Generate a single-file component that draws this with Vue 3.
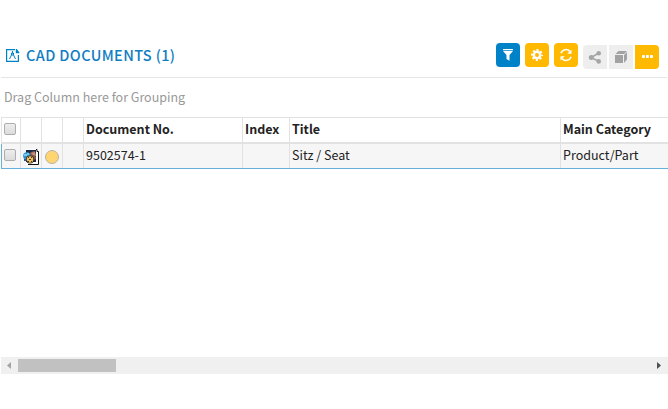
<script setup>
const columns = [
  { key: 'select', label: '' },
  { key: 'type', label: '' },
  { key: 'status', label: '' },
  { key: 'lock', label: '' },
  { key: 'number', label: 'Document No.' },
  { key: 'index', label: 'Index' },
  { key: 'title', label: 'Title' },
  { key: 'category', label: 'Main Category' }
]
const row = { number: '9502574-1', index: '', title: 'Sitz / Seat', category: 'Product/Part' }
</script>

<template>
  <main class="panel">
    <header class="heading">
      <svg class="doc-icon" width="14" height="15" viewBox="0 0 14 15" fill="none" stroke="#0082c8">
        <path d="M9 .6H.6v11.8h11.8V6" stroke-width="1.2" />
        <path d="M9.8 0v4.2h3.5V3.3L10.8 0z" fill="#0082c8" stroke="none" />
        <path d="M6.5 2v2M6 4.5 5 7 3.5 10M7 4.5 8 7l1.5 3M5.5 4h2v2h-2z" />
      </svg>
      <h1>CAD DOCUMENTS (1)</h1>
      <div class="tools">
        <button class="blue" aria-label="Filter">
          <svg width="24" height="24" viewBox="0 0 24 24" fill="#fff"><path d="M7 6h10v1.2H7zM7 8h10l-3.5 4v5.8L10.5 16v-4z" /></svg>
        </button>
        <button class="yellow" aria-label="Settings">
          <svg width="24" height="24" viewBox="0 0 24 24"><g fill="none" stroke="#fff"><circle cx="12" cy="12" r="3.2" stroke-width="2.4" /><circle cx="12" cy="12" r="4.9" stroke-width="2" stroke-dasharray="2.1 1.748" stroke-dashoffset="1.05" /></g></svg>
        </button>
        <button class="yellow" aria-label="Refresh">
          <svg width="24" height="24" viewBox="0 0 24 24" fill="none" stroke="#fff" stroke-width="1.5"><path d="M7 10.3A5.2 5.2 0 0 1 16 8.5M17 13.7A5.2 5.2 0 0 1 8 15.5" /><path d="M17.5 6.5v4.2h-4.2zM6.5 17.5v-4.2h4.2z" fill="#fff" stroke="none" /></svg>
        </button>
        <div class="group">
          <button class="gray first" aria-label="Share">
            <svg width="24" height="24" viewBox="0 0 24 24" fill="#a6a6a6"><path d="M16 8 8 12.5l8 4" fill="none" stroke="#a6a6a6" stroke-width="1.5" /><circle cx="15.7" cy="8.2" r="2.3" /><circle cx="8.3" cy="12.5" r="2.5" /><circle cx="15.7" cy="16.4" r="2.3" /></svg>
          </button>
          <button class="gray" aria-label="Model">
            <svg width="24" height="24" viewBox="0 0 24 24" fill="#a2a2a2"><path d="M6 10h8v8H6zM6.5 9l3-3H18l-3 3zM15 10l3-3v7.5L15 18z" /></svg>
          </button>
          <button class="yellow last" aria-label="More">
            <svg width="24" height="24" viewBox="0 0 24 24" fill="#fff"><rect x="7" y="10" width="3" height="3" rx=".8" /><rect x="11" y="10" width="3" height="3" rx=".8" /><rect x="15" y="10" width="3" height="3" rx=".8" /></svg>
          </button>
        </div>
      </div>
    </header>

    <div class="grouping"><span>Drag Column here for Grouping</span></div>

    <section class="grid">
      <div class="line head">
        <div v-for="col in columns" :key="col.key" class="cell">
          <i v-if="col.key === 'select'" class="check"></i>
          <span v-else :class="col.key">{{ col.label }}</span>
        </div>
      </div>
      <div class="line record">
        <div v-for="col in columns" :key="col.key" class="cell">
          <i v-if="col.key === 'select'" class="check"></i>
          <svg v-else-if="col.key === 'type'" class="part" width="17" height="16" viewBox="0 0 17 16">
            <path d="M3 0h10l3 3v13H3z" fill="#fff" />
            <path d="M13 .5h1v2h1.5v13H5" fill="none" stroke="#111" />
            <path d="M3 1h10v12H3z" fill="#172848" />
            <path d="M6 5q2-3 6-3l1 8-3 1z" fill="#865b4b" />
            <path d="m8 4 4-1 1 4-3-1z" fill="#c89070" />
            <circle cx="3.8" cy="7" r="3.7" fill="#3392cc" />
            <path d="M1 5h3v2H1zM4 4h2v2H4z" fill="#72cbed" />
            <circle cx="7" cy="10.5" r="4" fill="#2c2520" />
            <circle cx="7" cy="10.5" r="3.3" fill="#efbd5c" />
            <path d="M5 8h1v1H5zM8 8h1v1H8zM6 10h2v1H6zM4 12h2v1H4zM8 12h1v1H8z" fill="#493826" />
            <path d="M1 10h2v2H1z" fill="#235b99" />
          </svg>
          <i v-else-if="col.key === 'status'" class="dot"></i>
          <span v-else :class="col.key">{{ row[col.key] }}</span>
        </div>
      </div>
    </section>

    <div class="scrollbar">
      <svg width="17" height="17" viewBox="0 0 17 17"><path d="M10 5v7L6 8.5z" fill="#a3a3a3" /></svg>
      <div class="thumb"></div>
      <svg class="right" width="17" height="17" viewBox="0 0 17 17"><path d="M6 5v7l4-3.5z" fill="#505050" /></svg>
    </div>
  </main>
</template>

<style>
body { background: #fff; overflow: hidden; }
</style>

<style scoped>
* { box-sizing: border-box; }
.panel {
  width: 668px; height: 409px; padding: 43px 1px 0 1px; overflow: hidden;
  display: flex; flex-direction: column;
  font-family: "Noto Sans CJK SC", "Open Sans", sans-serif; font-size: 12.5px; color: #222;
}
.heading { display: flex; height: 35px; flex: none; border-bottom: 1px solid #e5e5e5; padding-left: 5px; }
.doc-icon { margin-top: 6px; flex: none; }
h1 { margin: 0 0 0 6px; font-size: 14.5px; line-height: 23px; font-weight: 500; color: #0f7dc2; letter-spacing: .38px; white-space: nowrap; }
.tools { display: flex; margin-left: auto; margin-right: 8px; gap: 5px; }
button { width: 24px; height: 24px; padding: 0; border: 0; border-radius: 4px; display: block; }
button svg { display: block; }
.blue { background: #0082c8; }
.yellow { background: #ffb900; }
.gray { background: #eee; border-radius: 0; }
.group { display: flex; gap: 2px; padding-top: 2px; }
.first { border-radius: 4px 0 0 4px; }
.last { border-radius: 0 4px 4px 0; }
.grouping { height: 39px; flex: none; padding-left: 3px; line-height: 37px; color: #999; white-space: nowrap; }
.grid { width: 667px; flex: none; border-top: 1px solid #e2e2e2; }
.line { display: grid; grid-template-columns: 19px 21px 21px 21px 159px 47px 271px 107px; }
.head { height: 26px; border-bottom: 2px solid #e2e2e2; font-weight: 700; border-left: 1px solid #e2e2e2; }
.record { height: 25px; background: #f6f6f6; border-bottom: 1px solid #66b1da; border-left: 1px solid #66b1da; }
.cell { border-right: 1px solid #e2e2e2; padding-left: 2px; line-height: 21px; white-space: nowrap; }
.cell:last-child { border-right: 0; }
.check { display: block; width: 12px; height: 12px; margin-top: 5px; border: 1px solid #adadad; border-radius: 2px; background: linear-gradient(#ededed, #dcdcdc); }
.part { display: block; margin-top: 5px; }
.dot { display: block; width: 14px; height: 14px; margin: 6px 0 0 1px; border: 1px solid #b9b3a5; border-radius: 50%; background: #ffd571; }
.scrollbar { display: flex; width: 667px; height: 17px; flex: none; margin-top: 188px; background: #f0f0f0; }
.scrollbar svg { flex: none; }
.thumb { width: 98px; height: 13px; margin-top: 2px; background: #c1c1c1; }
.right { margin-left: auto; }
</style>
